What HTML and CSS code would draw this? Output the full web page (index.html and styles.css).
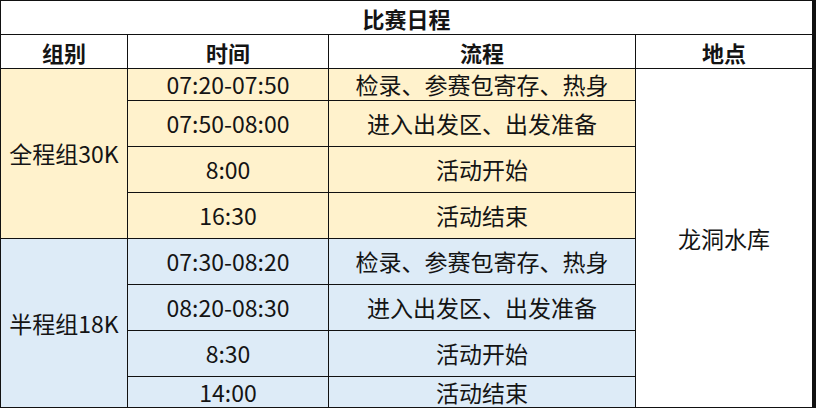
FILE: index.html
```html
<!DOCTYPE html>
<html lang="zh">
<head>
<meta charset="utf-8">
<link rel="stylesheet" href="styles.css">
</head>
<body>
<div class="schedule">
  <div class="cell title">比赛日程</div>
  <div class="cell head">组别</div>
  <div class="cell head">时间</div>
  <div class="cell head">流程</div>
  <div class="cell head">地点</div>

  <div class="cell yellow group g1">全程组30K</div>
  <div class="cell yellow">07:20-07:50</div>
  <div class="cell yellow">检录、参赛包寄存、热身</div>
  <div class="cell place">龙洞水库</div>
  <div class="cell yellow">07:50-08:00</div>
  <div class="cell yellow">进入出发区、出发准备</div>
  <div class="cell yellow">8:00</div>
  <div class="cell yellow">活动开始</div>
  <div class="cell yellow">16:30</div>
  <div class="cell yellow">活动结束</div>

  <div class="cell blue group g2">半程组18K</div>
  <div class="cell blue">07:30-08:20</div>
  <div class="cell blue">检录、参赛包寄存、热身</div>
  <div class="cell blue">08:20-08:30</div>
  <div class="cell blue">进入出发区、出发准备</div>
  <div class="cell blue">8:30</div>
  <div class="cell blue">活动开始</div>
  <div class="cell blue">14:00</div>
  <div class="cell blue">活动结束</div>
</div>
</body>
</html>
```
FILE: styles.css
```css
html, body {
  margin: 0;
  padding: 0;
  background: #ffffff;
}
.schedule {
  display: grid;
  grid-template-columns: 126px 200px 306px 176px;
  grid-template-rows: 33px 33px 31px 45px 45px 45px 45px 45px 45px 30px;
  gap: 1px;
  background: #111111;
  border: 1px solid #111111;
  border-right: 4px solid #111111;
  width: max-content;
  font-family: "Noto Sans CJK SC", "Microsoft YaHei", sans-serif;
  font-size: 23px;
  color: #141414;
}
.cell {
  display: flex;
  align-items: center;
  justify-content: center;
  background: #ffffff;
  line-height: 1;
  white-space: nowrap;
}
.title {
  grid-column: 1 / 5;
  font-weight: 700;
  font-size: 22px;
}
.head {
  font-weight: 700;
  font-size: 22px;
}
.yellow {
  background: #fff2cc;
}
.blue {
  background: #ddebf7;
}
.g1 {
  grid-column: 1;
  grid-row: 3 / 7;
}
.g2 {
  grid-column: 1;
  grid-row: 7 / 11;
}
.place {
  grid-column: 4;
  grid-row: 3 / 11;
}
```
